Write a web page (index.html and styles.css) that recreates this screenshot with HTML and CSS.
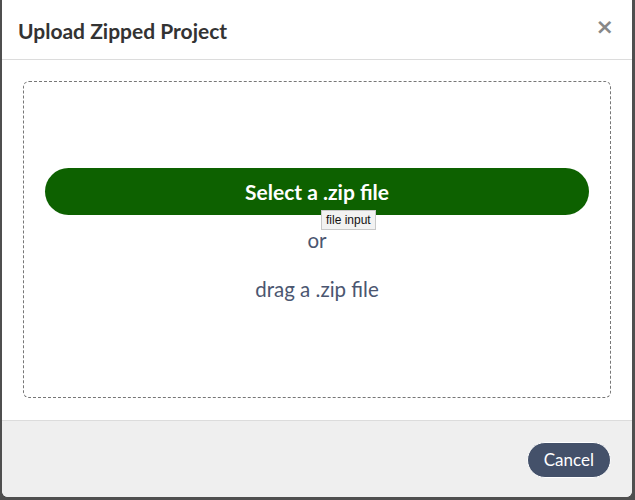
FILE: index.html
```html
<!DOCTYPE html>
<html>
<head>
<meta charset="utf-8">
<link rel="stylesheet" href="styles.css">
</head>
<body>
<div class="modal">
  <div class="modal-header">
    <h2 class="modal-title">Upload Zipped Project</h2>
    <span class="close">&times;</span>
  </div>
  <div class="modal-body">
    <div class="dropzone">
      <div class="select-wrap">
        <button class="select-btn">Select a .zip file</button>
        <span class="tooltip">file input</span>
      </div>
      <div class="or">or</div>
      <div class="drag">drag a .zip file</div>
    </div>
  </div>
  <div class="modal-footer">
    <button class="cancel-btn">Cancel</button>
  </div>
</div>
</body>
</html>
```
FILE: styles.css
```css
html, body {
  margin: 0;
  padding: 0;
  background: #4f4f4f;
  font-family: Lato, "Noto Sans", sans-serif;
}
.modal {
  margin: 0 3px 0 2px;
  height: 497px;
  background: #fff;
  border-radius: 0 0 6px 6px;
  display: flex;
  flex-direction: column;
  overflow: hidden;
}
.modal-header {
  height: 60px;
  border-bottom: 1px solid #dcdcdc;
  display: flex;
  align-items: center;
  justify-content: space-between;
  padding: 0 18px 0 16px;
  box-sizing: border-box;
  flex: none;
}
.modal-title {
  margin: 0;
  font-size: 21px;
  font-weight: 700;
  color: #333;
  padding-top: 2px;
}
.close {
  font-family: "DejaVu Sans", sans-serif;
  font-size: 22px;
  font-weight: 700;
  color: #888;
  line-height: 1;
  margin-top: -6px;
}
.modal-body {
  flex: 1;
  padding: 21px 21px 22px 21px;
  display: flex;
}
.dropzone {
  flex: 1;
  border: 1px dashed #777;
  border-radius: 6px;
  padding: 86px 21px 0 21px;
  display: flex;
  flex-direction: column;
  align-items: stretch;
}
.select-wrap {
  position: relative;
}
.select-btn {
  width: 100%;
  height: 47px;
  border: none;
  border-radius: 24px;
  background: #0d6100;
  color: #fff;
  font-family: Lato, sans-serif;
  font-size: 21px;
  font-weight: 700;
  padding: 0;
  display: block;
}
.tooltip {
  position: absolute;
  left: 276px;
  top: 42px;
  background: #f2f2f2;
  border: 1px solid #c8c8c8;
  font-family: "Liberation Sans", Arial, sans-serif;
  font-size: 12px;
  color: #111;
  padding: 2px 4px 2px;
  line-height: 14px;
}
.or {
  text-align: center;
  font-size: 20.5px;
  color: #4b5670;
  margin-top: 11px;
  line-height: 28px;
}
.drag {
  text-align: center;
  font-size: 20.5px;
  color: #4b5670;
  margin-top: 21px;
  line-height: 28px;
}
.modal-footer {
  height: 77px;
  border-top: 1px solid #dcdcdc;
  background: #efefef;
  display: flex;
  align-items: center;
  justify-content: flex-end;
  padding: 0 21px;
  box-sizing: border-box;
  flex: none;
}
.cancel-btn {
  height: 36px;
  padding: 0 16px;
  border: 1px solid #fff;
  border-radius: 18px;
  background: #44516a;
  color: #fff;
  font-family: Lato, sans-serif;
  font-size: 17px;
  margin-top: 1px;
}
```
